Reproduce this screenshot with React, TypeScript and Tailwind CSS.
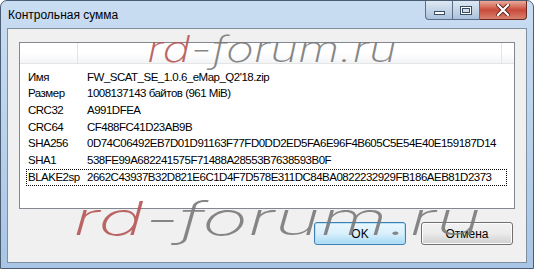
const rows: [string, string][] = [
  ["Имя", "FW_SCAT_SE_1.0.6_eMap_Q2'18.zip"],
  ["Размер", "1008137143 байтов (961 MiB)"],
  ["CRC32", "A991DFEA"],
  ["CRC64", "CF488FC41D23AB9B"],
  ["SHA256", "0D74C06492EB7D01D91163F77FD0DD2ED5FA6E96F4B605C5E54E40E159187D14"],
  ["SHA1", "538FE99A682241575F71488A28553B7638593B0F"],
  ["BLAKE2sp", "2662C43937B32D821E6C1D4F7D578E311DC84BA0822232929FB186AEB81D2373"],
];

function CaptionButtons() {
  return (
    <div className="ml-auto mr-[6px] flex h-[19px]">
      {/* minimize */}
      <div className="flex w-[28px] items-center justify-center rounded-bl-[4px] border border-t-0 border-[#5d6f86] bg-gradient-to-b from-[#dde8f3] via-[#c4d5e7] to-[#aac2dc]">
        <div className="mt-[5px] h-[4px] w-[11px] border border-[#3b4d63] bg-white" />
      </div>
      {/* maximize */}
      <div className="flex w-[27px] items-center justify-center border border-l-0 border-t-0 border-[#5d6f86] bg-gradient-to-b from-[#dde8f3] via-[#c4d5e7] to-[#aac2dc]">
        <div className="h-[9px] w-[12px] border border-[#3b4d63] bg-white p-[1px]">
          <div className="h-full w-full border border-[#3b4d63] bg-[#cfdbe8]" />
        </div>
      </div>
      {/* close */}
      <div className="flex w-[47px] items-center justify-center rounded-br-[4px] border border-l-0 border-t-0 border-[#6b2a22] bg-gradient-to-b from-[#e9aa9c] via-[#c8493a] to-[#d8806e]">
        <svg width="14" height="12" viewBox="0 0 14 12">
          <path d="M2 1 L12 11 M12 1 L2 11" stroke="#5a1e18" strokeWidth="4" strokeLinecap="square" />
          <path d="M2 1 L12 11 M12 1 L2 11" stroke="#ffffff" strokeWidth="2.2" strokeLinecap="square" />
        </svg>
      </div>
    </div>
  );
}

export default function App() {
  return (
    <div className="relative h-[269px] w-[534px] overflow-hidden bg-white font-['Liberation_Sans',Arial,sans-serif]">
      <div className="flex h-full w-full flex-col rounded-t-[7px] border border-[#4b5d72] bg-gradient-to-b from-[#c9ddf2] via-[#b9d2ec] to-[#a8c5e5]">
        {/* Title bar */}
        <div className="flex h-[27px] items-start">
          <span className="pl-[7px] pt-[7px] text-[12px] leading-[14px] text-black">Контрольная сумма</span>
          <CaptionButtons />
        </div>

        {/* Client area */}
        <div className="mx-[6px] mb-[5px] flex flex-1 flex-col border border-[#7f8fa0] bg-[#f0f0f0] px-[11px] pt-[13px]">
          {/* List view */}
          <div className="flex h-[167px] flex-col border border-[#828790] bg-white">
            <div className="flex h-[21px] border-b border-[#e5e5e5] bg-gradient-to-b from-white via-white to-[#f3f4f6]">
              <div className="w-[58px] border-r border-[#e3e4e6]" />
              <div className="w-[424px] border-r border-[#e3e4e6]" />
            </div>
            <div className="pt-[5px] text-[11.5px] tracking-[-0.5px] text-black">
              {rows.map(([k, v], i) => (
                <div
                  key={k}
                  className={
                    i === rows.length - 1
                      ? "ml-[6px] mr-[7px] flex h-[16.7px] items-center border border-dotted border-black pl-[1px]"
                      : "ml-[6px] mr-[7px] flex h-[16.7px] items-center border border-transparent pl-[1px]"
                  }
                >
                  <span className="w-[59px] shrink-0">{k}</span>
                  <span className="whitespace-nowrap">{v}</span>
                </div>
              ))}
            </div>
          </div>

          {/* Buttons */}
          <div className="mt-[13px] flex justify-end gap-[15px] pr-[2px]">
            <button className="h-[23px] w-[92px] rounded-[3px] border border-[#3c7fb1] bg-gradient-to-b from-[#eaf6fd] via-[#d9f0fc] to-[#a7d9f5] text-[12px] text-black shadow-[inset_0_0_0_1px_#b8e0f7]">
              OK
            </button>
            <button className="h-[23px] w-[92px] rounded-[3px] border border-[#707070] bg-gradient-to-b from-[#f2f2f2] via-[#ebebeb] to-[#cfcfcf] text-[12px] text-black shadow-[inset_0_0_0_1px_#fcfcfc]">
              Отмена
            </button>
          </div>
        </div>
      </div>

      {/* Watermarks */}
      <span className="pointer-events-none absolute left-[147px] top-[31px] origin-left scale-x-[1.32] font-['Inter',sans-serif] text-[36px] font-extralight italic leading-none opacity-90">
        <span className="text-[#b65555]">rd</span>
        <span className="text-[#7a7a7a]">-forum.ru</span>
      </span>
      <span className="pointer-events-none absolute left-[73px] top-[195px] origin-left scale-x-[1.69] font-['Inter',sans-serif] text-[46px] font-extralight italic leading-none opacity-90">
        <span className="text-[#b65555]">rd</span>
        <span className="text-[#7a7a7a]">-forum.ru</span>
      </span>
    </div>
  );
}
